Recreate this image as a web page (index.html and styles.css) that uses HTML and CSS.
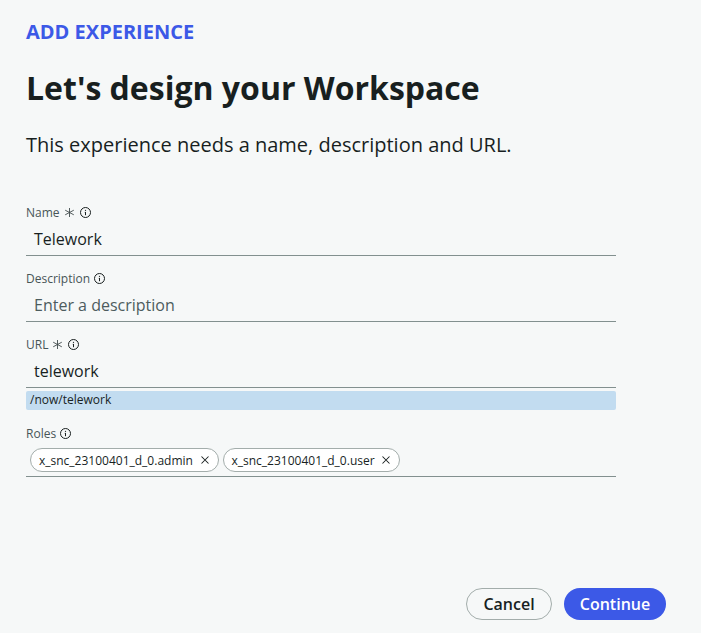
FILE: index.html
```html
<!DOCTYPE html>
<html lang="en">
<head>
<meta charset="utf-8">
<title>Add experience</title>
<link rel="stylesheet" href="styles.css">
</head>
<body>
<svg class="sprite" aria-hidden="true">
  <symbol id="info" viewBox="0 0 12 12"><circle cx="5.5" cy="5.5" r="5" fill="none" stroke="currentColor"/><path d="M5.5 5v3.2M4.8 5.3h.7" fill="none" stroke="currentColor"/><circle cx="5.5" cy="3.3" r=".65" fill="currentColor"/></symbol>
  <symbol id="required" viewBox="0 0 12 12"><path d="M5.5 1v9M1.2 3.2l8.6 4.6M1.2 7.8l8.6-4.6" fill="none" stroke="currentColor" stroke-width=".9"/></symbol>
  <symbol id="close" viewBox="0 0 10 10"><path d="M1.5 1.5l7 7M8.5 1.5l-7 7" fill="none" stroke="currentColor" stroke-width="1.05"/></symbol>
</svg>
<main class="page">
  <p class="eyebrow">ADD EXPERIENCE</p>
  <h1 class="title">Let's design your Workspace</h1>
  <p class="lead">This experience needs a name, description and URL.</p>
  <form class="form">
    <div class="field">
      <div class="label"><span>Name</span><svg class="icon req"><use href="#required"/></svg><svg class="icon"><use href="#info"/></svg></div>
      <div class="value">Telework</div>
    </div>
    <div class="field">
      <div class="label"><span>Description</span><svg class="icon"><use href="#info"/></svg></div>
      <div class="value placeholder">Enter a description</div>
    </div>
    <div class="field url">
      <div class="label"><span>URL</span><svg class="icon req"><use href="#required"/></svg><svg class="icon"><use href="#info"/></svg></div>
      <div class="value">telework</div>
      <div class="hint">/now/telework</div>
    </div>
    <div class="field">
      <div class="label"><span>Roles</span><svg class="icon"><use href="#info"/></svg></div>
      <div class="pills">
        <span class="pill"><span>x_snc_23100401_d_0.admin</span><svg class="close"><use href="#close"/></svg></span>
        <span class="pill second"><span>x_snc_23100401_d_0.user</span><svg class="close"><use href="#close"/></svg></span>
      </div>
    </div>
  </form>
  <footer class="actions">
    <button class="button cancel">Cancel</button>
    <button class="button primary">Continue</button>
  </footer>
</main>
</body>
</html>
```

FILE: styles.css
```css
* { box-sizing: border-box; }
body { margin: 0; background: #f6f8f8; color: #181f1f; font-family: "Open Sans", sans-serif; }
.sprite { display: none; }
.page { height: 633px; padding: 18px 35px 13px 26px; display: flex; flex-direction: column; white-space: nowrap; }
.eyebrow { margin: 0; font-size: 20px; line-height: 28px; font-weight: 700; color: #3c59e7; }
.title { margin: 20px 0 0; font-size: 32px; line-height: 44px; font-weight: 700; }
.lead { margin: 21px 0 0; font-size: 20px; line-height: 28px; }
.form { width: 590px; margin-top: 45px; }
.field { margin-bottom: 14px; }
.url { margin-bottom: 15px; }
.label { height: 18px; display: flex; align-items: center; gap: 4px; font-size: 12px; line-height: 18px; color: #475557; }
.icon { width: 12px; height: 12px; color: #181f1f; }
.req { color: #3f494b; }
.value { height: 34px; border-bottom: 1px solid #82908f; padding: 1px 8px 0; font-size: 16px; line-height: 33px; }
.placeholder { color: #4d5c5e; }
.hint { height: 19px; margin-top: 3px; padding: 0 4px; background: #c2dcf0; font-size: 12px; line-height: 18px; border-radius: 2px; }
.pills { height: 34px; border-bottom: 1px solid #82908f; padding: 5px 4px 0; display: flex; gap: 4px; }
.pill { width: 189px; height: 24px; padding: 0 8px; display: flex; align-items: center; justify-content: space-between; border: 1px solid #a3adab; border-radius: 12px; background: #fff; font-size: 12px; }
.second { width: 177px; padding-left: 7.5px; }
.close { width: 10px; height: 10px; }
.actions { margin-top: auto; display: flex; justify-content: flex-end; gap: 12px; }
.button { height: 32px; padding: 0; border-radius: 16px; font: 600 16px "Open Sans", sans-serif; }
.cancel { width: 86px; border: 1px solid #a3adab; background: #f6f8f8; color: #181f1f; }
.primary { width: 102px; border: 0; background: #3c59e7; color: #fff; }
```
